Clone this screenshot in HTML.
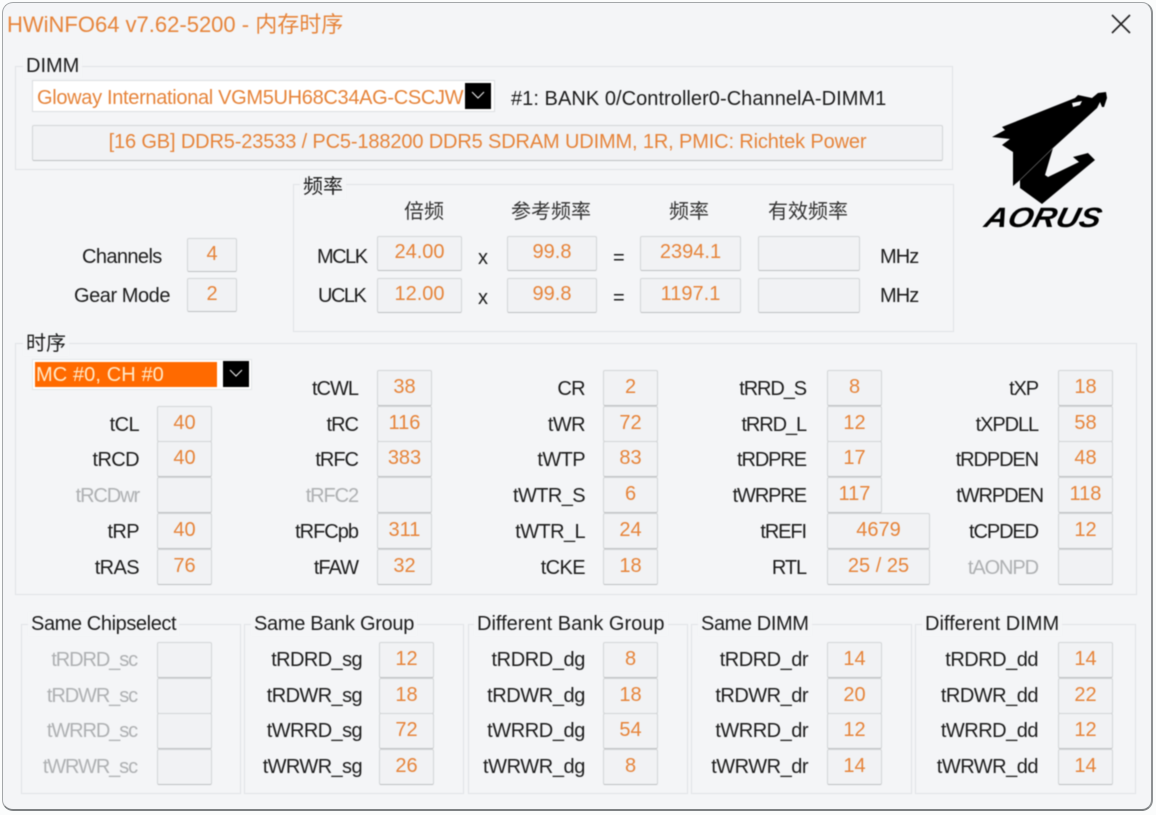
<!DOCTYPE html>
<html lang="zh"><head><meta charset="utf-8"><title>HWiNFO64</title>
<style>
html,body{margin:0;padding:0;width:1156px;height:815px;overflow:hidden;background:#fbfcfc}
body{font-family:"Liberation Sans","Noto Sans CJK SC",sans-serif;font-size:20px;color:#1c1c1c}
#w{position:absolute;left:2px;top:2px;width:1148px;height:806px;background:#f4f5f7;border:1px solid #a4a7a9;border-bottom:2px solid #7d8082;border-right:2px solid #8d9092;border-radius:11px}
#p{position:absolute;left:0;top:0;width:1156px;height:815px;filter:blur(.5px)}
.a{position:absolute;white-space:nowrap}
.g{position:absolute;border:1px solid #e1e3e6;box-sizing:border-box}
.gt{position:absolute;background:#f4f5f7;padding:0 3px 0 3px;line-height:24px;white-space:nowrap}
.v{position:absolute;box-sizing:border-box;background:#f1f2f4;border:1px solid #d3d5d7;border-bottom-color:#bfc1c3;border-radius:2px;color:#e6843a;text-align:center;line-height:30px}
.c{position:absolute;left:0;top:0;width:0;height:0}
.r{position:absolute;left:0;width:0;height:36px}
.r span{position:absolute;left:calc(var(--e) - 140px);width:140px;text-align:right;line-height:38px;white-space:nowrap;letter-spacing:var(--l,-.6px)}
.r b{position:absolute;left:var(--b);top:0;width:55px;height:36px;box-sizing:border-box;background:#f1f2f4;border:1px solid #d3d5d7;border-bottom-color:#bfc1c3;border-radius:2px;color:#e6843a;font-weight:normal;text-align:center;line-height:32px}
.d span{color:#aeb0b2;font-weight:normal;letter-spacing:-1.1px}
.r0{top:370px}.r1{top:406px}.r2{top:441px}.r3{top:477px}.r4{top:513px}.r5{top:549px}
.s0{top:642px}.s1{top:678px}.s2{top:713px}.s3{top:749px}
.s0 span,.s1 span,.s2 span,.s3 span{line-height:36px}
.btn{position:absolute;background:#000;width:26px;height:26px}
.btn svg{position:absolute;left:5px;top:8px}
</style></head><body>
<div id="w"></div>
<div id="p">
<div class="a" style="left:7px;top:12px;color:#e6843a;font-size:22px;line-height:26px">HWiNFO64 v7.62-5200 - 内存时序</div>
<svg class="a" style="left:1110px;top:13px" width="22" height="22"><path d="M2 2L20 20M20 2L2 20" stroke="#222" stroke-width="1.6" fill="none"/></svg>

<div class="g" style="left:15px;top:66px;width:938px;height:104px"></div>
<div class="gt" style="left:23px;top:54px">DIMM</div>
<div class="a" style="left:32px;top:80px;width:463px;height:32px;background:#fff;border:1px solid #dcdee0;box-sizing:border-box"></div>
<div class="a" style="left:37px;top:85px;color:#e6843a;line-height:26px;letter-spacing:-.32px">Gloway International VGM5UH68C34AG-CSCJW</div>
<div class="btn" style="left:465px;top:83px"><svg width="16" height="10"><path d="M2 1L8 7L14 1" stroke="#ddd" stroke-width="1.2" fill="none"/></svg></div>
<div class="a" style="left:511px;top:86px;line-height:26px;letter-spacing:.05px">#1: BANK 0/Controller0-ChannelA-DIMM1</div>
<div class="v" style="left:32px;top:125px;width:911px;height:36px;letter-spacing:-.14px;line-height:32px">[16 GB] DDR5-23533 / PC5-188200 DDR5 SDRAM UDIMM, 1R, PMIC: Richtek Power</div>

<svg class="a" style="left:975px;top:85px" width="140" height="150">
<g transform="translate(-975,-85)">
<path d="M1106 92L1098 93L1092 98L1078 95L1075 98L1002 127L1005 130L992 137L1010 139L1002 145L1013 152L1013 186L1020 180L1020 188L1042 204L1095 160L1088 153L1073 157L1079 162L1048 177L1045 175L1053 148L1097 108L1100 102L1102 107L1104 107L1107 98Z" fill="#000"/>
<path d="M1072 103L1082 101L1080 105L1073 107Z" fill="#f4f5f7"/>
<path d="M1020 180L1053 148" stroke="#777" stroke-width=".6" fill="none"/>
<text transform="translate(983,227) skewX(-14)" font-family="Liberation Sans" font-weight="bold" font-style="italic" font-size="28" textLength="116" lengthAdjust="spacingAndGlyphs" fill="#000">AORUS</text>
</g></svg>

<div class="g" style="left:293px;top:184px;width:661px;height:148px"></div>
<div class="gt" style="left:300px;top:175px">频率</div>
<div class="a" style="left:404px;top:200px;line-height:24px;color:#333">倍频</div>
<div class="a" style="left:511px;top:200px;line-height:24px;color:#333">参考频率</div>
<div class="a" style="left:669px;top:200px;line-height:24px;color:#333">频率</div>
<div class="a" style="left:768px;top:200px;line-height:24px;color:#333">有效频率</div>
<div class="a" style="left:317px;top:245px;line-height:24px;letter-spacing:-1.5px">MCLK</div>
<div class="a" style="left:318px;top:284px;line-height:24px;letter-spacing:-1.5px">UCLK</div>
<div class="v" style="left:377px;top:236px;width:85px;height:35px">24.00</div>
<div class="v" style="left:377px;top:278px;width:85px;height:35px">12.00</div>
<div class="a" style="left:478px;top:246px;line-height:24px">x</div>
<div class="a" style="left:478px;top:286px;line-height:24px">x</div>
<div class="v" style="left:507px;top:236px;width:90px;height:35px">99.8</div>
<div class="v" style="left:507px;top:278px;width:90px;height:35px">99.8</div>
<div class="a" style="left:613px;top:246px;line-height:24px">=</div>
<div class="a" style="left:613px;top:286px;line-height:24px">=</div>
<div class="v" style="left:640px;top:236px;width:101px;height:35px">2394.1</div>
<div class="v" style="left:640px;top:278px;width:101px;height:35px">1197.1</div>
<div class="v" style="left:758px;top:236px;width:102px;height:35px"></div>
<div class="v" style="left:758px;top:278px;width:102px;height:35px"></div>
<div class="a" style="left:880px;top:245px;line-height:24px;letter-spacing:-.9px">MHz</div>
<div class="a" style="left:880px;top:284px;line-height:24px;letter-spacing:-.9px">MHz</div>

<div class="a" style="left:82px;top:245px;line-height:24px;letter-spacing:-.6px">Channels</div>
<div class="a" style="left:74px;top:284px;line-height:24px;letter-spacing:-.45px">Gear Mode</div>
<div class="v" style="left:187px;top:238px;width:50px;height:34px">4</div>
<div class="v" style="left:187px;top:278px;width:50px;height:34px">2</div>

<div class="g" style="left:15px;top:343px;width:1122px;height:252px"></div>
<div class="gt" style="left:23px;top:332px">时序</div>
<div class="a" style="left:32px;top:359px;width:220px;height:31px;background:#fff;border:1px solid #e4e6e8;box-sizing:border-box"></div>
<div class="a" style="left:35px;top:362px;width:182px;height:25px;background:#ff6a00;color:#ffe9c8;line-height:26px;letter-spacing:.1px;text-indent:1px">MC #0, CH #0</div>
<div class="btn" style="left:223px;top:361px"><svg width="16" height="10"><path d="M2 1L8 7L14 1" stroke="#ddd" stroke-width="1.2" fill="none"/></svg></div>

<div class="c" style="--e:139px;--b:157px">
<div class="r r1"><span>tCL</span><b>40</b></div>
<div class="r r2"><span>tRCD</span><b>40</b></div>
<div class="r r3 d"><span>tRCDwr</span><b></b></div>
<div class="r r4"><span>tRP</span><b>40</b></div>
<div class="r r5"><span>tRAS</span><b>76</b></div>
</div>
<div class="c" style="--e:358px;--b:377px;--l:-1px">
<div class="r r0"><span>tCWL</span><b>38</b></div>
<div class="r r1"><span>tRC</span><b>116</b></div>
<div class="r r2"><span>tRFC</span><b>383</b></div>
<div class="r r3 d"><span>tRFC2</span><b></b></div>
<div class="r r4"><span>tRFCpb</span><b>311</b></div>
<div class="r r5"><span>tFAW</span><b>32</b></div>
</div>
<div class="c" style="--e:585px;--b:603px">
<div class="r r0"><span>CR</span><b>2</b></div>
<div class="r r1"><span>tWR</span><b>72</b></div>
<div class="r r2"><span>tWTP</span><b>83</b></div>
<div class="r r3"><span>tWTR_S</span><b>6</b></div>
<div class="r r4"><span>tWTR_L</span><b>24</b></div>
<div class="r r5"><span>tCKE</span><b>18</b></div>
</div>
<div class="c" style="--e:806px;--b:827px;--l:-1.1px">
<div class="r r0"><span>tRRD_S</span><b>8</b></div>
<div class="r r1"><span>tRRD_L</span><b>12</b></div>
<div class="r r2"><span>tRDPRE</span><b>17</b></div>
<div class="r r3"><span>tWRPRE</span><b>117</b></div>
<div class="r r4"><span>tREFI</span><b style="width:103px">4679</b></div>
<div class="r r5"><span>RTL</span><b style="width:103px">25 / 25</b></div>
</div>
<div class="c" style="--e:1038px;--b:1058px;--l:-1.1px">
<div class="r r0"><span>tXP</span><b>18</b></div>
<div class="r r1"><span>tXPDLL</span><b>58</b></div>
<div class="r r2"><span>tRDPDEN</span><b>48</b></div>
<div class="r r3"><span style="left:903px">tWRPDEN</span><b>118</b></div>
<div class="r r4"><span>tCPDED</span><b>12</b></div>
<div class="r r5 d"><span>tAONPD</span><b></b></div>
</div>

<div class="g" style="left:21px;top:624px;width:220px;height:170px"></div>
<div class="g" style="left:244px;top:624px;width:220px;height:170px"></div>
<div class="g" style="left:468px;top:624px;width:220px;height:170px"></div>
<div class="g" style="left:691px;top:624px;width:221px;height:170px"></div>
<div class="g" style="left:915px;top:624px;width:221px;height:170px"></div>
<div class="gt" style="left:28px;top:612px;letter-spacing:-.4px">Same Chipselect</div>
<div class="gt" style="left:251px;top:612px;letter-spacing:-.3px">Same Bank Group</div>
<div class="gt" style="left:474px;top:612px">Different Bank Group</div>
<div class="gt" style="left:698px;top:612px;letter-spacing:-.4px">Same DIMM</div>
<div class="gt" style="left:922px;top:612px">Different DIMM</div>

<div class="c" style="--e:137px;--b:157px">
<div class="r s0 d"><span>tRDRD_sc</span><b></b></div>
<div class="r s1 d"><span>tRDWR_sc</span><b></b></div>
<div class="r s2 d"><span>tWRRD_sc</span><b></b></div>
<div class="r s3 d"><span>tWRWR_sc</span><b></b></div>
</div>
<div class="c" style="--e:362px;--b:379px">
<div class="r s0"><span>tRDRD_sg</span><b>12</b></div>
<div class="r s1"><span>tRDWR_sg</span><b>18</b></div>
<div class="r s2"><span>tWRRD_sg</span><b>72</b></div>
<div class="r s3"><span>tWRWR_sg</span><b>26</b></div>
</div>
<div class="c" style="--e:585px;--b:603px;--l:-.4px">
<div class="r s0"><span>tRDRD_dg</span><b>8</b></div>
<div class="r s1"><span>tRDWR_dg</span><b>18</b></div>
<div class="r s2"><span>tWRRD_dg</span><b>54</b></div>
<div class="r s3"><span>tWRWR_dg</span><b>8</b></div>
</div>
<div class="c" style="--e:808px;--b:827px;--l:-.5px">
<div class="r s0"><span>tRDRD_dr</span><b>14</b></div>
<div class="r s1"><span>tRDWR_dr</span><b>20</b></div>
<div class="r s2"><span>tWRRD_dr</span><b>12</b></div>
<div class="r s3"><span>tWRWR_dr</span><b>14</b></div>
</div>
<div class="c" style="--e:1038px;--b:1058px;--l:-.5px">
<div class="r s0"><span>tRDRD_dd</span><b>14</b></div>
<div class="r s1"><span>tRDWR_dd</span><b>22</b></div>
<div class="r s2"><span>tWRRD_dd</span><b>12</b></div>
<div class="r s3"><span>tWRWR_dd</span><b>14</b></div>
</div>
</div>
</body></html>
